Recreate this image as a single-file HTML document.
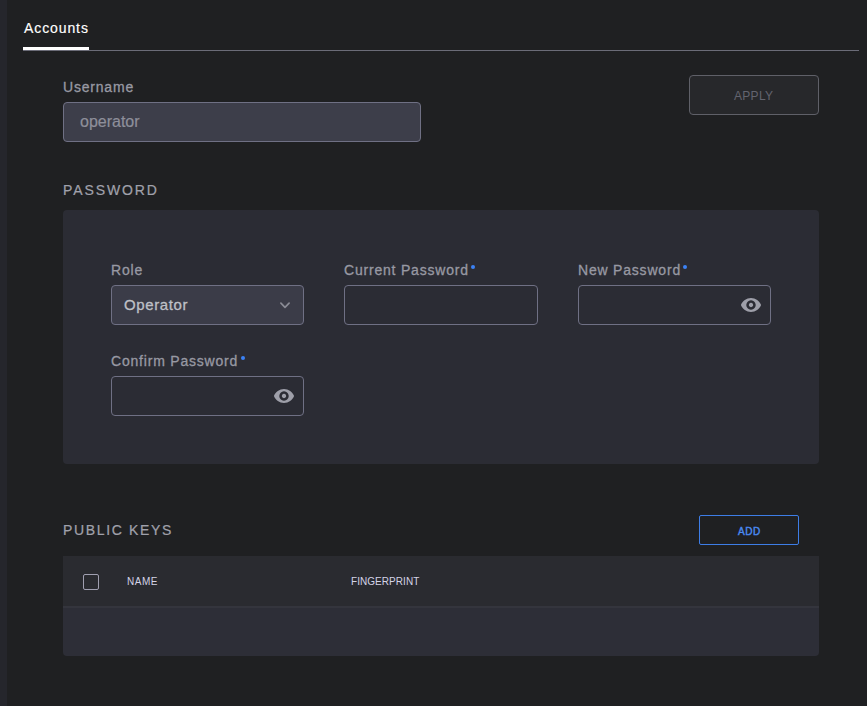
<!DOCTYPE html>
<html>
<head>
<meta charset="utf-8">
<style>
*{box-sizing:border-box;margin:0;padding:0}
html,body{width:867px;height:706px;overflow:hidden;background:#1f2022;font-family:"Liberation Sans",sans-serif}
.abs{position:absolute}
.strip{left:0;top:0;width:7px;height:706px;background:#25262c}
.tab{left:24px;top:20px;font-size:14px;color:#ffffff;letter-spacing:0.9px;white-space:nowrap;-webkit-text-stroke:0.15px #fff}
.tabline{left:23px;top:47px;width:66px;height:3px;background:#ffffff}
.divider{left:23px;top:50px;width:836px;height:1px;background:#6b6c78}
.lbl{font-size:14px;color:#9899a3;letter-spacing:0.8px;white-space:nowrap;-webkit-text-stroke:0.3px #9899a3}
.input{border:1px solid #6f7084;border-radius:4px}
.uname{left:63px;top:102px;width:358px;height:40px;background:#3d3e4a}
.utext{left:80px;top:113px;font-size:16px;color:#8e8f9a;white-space:nowrap;letter-spacing:0px;-webkit-text-stroke:0.2px #8e8f9a}
.apply{left:689px;top:75px;width:130px;height:40px;border:1px solid #5f6068;border-radius:4px;background:#27282b}
.applyt{left:734px;top:89px;font-size:12px;color:#63646f;letter-spacing:0.3px;white-space:nowrap}
.h{font-size:14px;color:#a0a1ab;letter-spacing:1.9px;white-space:nowrap;-webkit-text-stroke:0.2px #a3a4ae}
.panel{left:63px;top:210px;width:756px;height:254px;background:#2b2c34;border-radius:4px}
.sel{background:#3b3c48}
.pw{background:#2b2c34}
.dot{width:4.5px;height:4.5px;margin:-0.2px 0 0 -0.2px;border-radius:50%;background:#3b82f6}
.eye{width:22px;height:22px}
.add{left:699px;top:515px;width:100px;height:30px;border:1px solid #3d7de6;border-radius:2px}
.addt{left:738px;top:526px;font-size:10px;font-weight:400;color:#4a8af0;white-space:nowrap;letter-spacing:0.6px;-webkit-text-stroke:0.4px #4a8af0}
.table{left:63px;top:556px;width:756px;height:100px;border-radius:0 0 4px 4px;background:#2d2e37;overflow:hidden}
.thead{left:0;top:0;width:756px;height:50px;background:#2a2b30}
.tdiv{left:0;top:50px;width:756px;height:2px;background:#34353d}
.cb{left:20px;top:18px;width:16px;height:16px;border:1.5px solid #a09fb0;border-radius:2px}
.th{font-size:10px;color:#d4d4e6;white-space:nowrap;letter-spacing:0.5px}
</style>
</head>
<body>
<div class="abs strip"></div>
<div class="abs tab">Accounts</div>
<div class="abs tabline"></div>
<div class="abs divider"></div>

<div class="abs lbl" style="left:63px;top:79px">Username</div>
<div class="abs input uname"></div>
<div class="abs utext">operator</div>

<div class="abs apply"></div>
<div class="abs applyt">APPLY</div>

<div class="abs h" style="left:63px;top:182px">PASSWORD</div>
<div class="abs panel"></div>

<div class="abs lbl" style="left:111px;top:262px">Role</div>
<div class="abs input sel" style="left:111px;top:285px;width:193px;height:40px"></div>
<div class="abs" style="left:124px;top:296px;font-size:15px;color:#bfc0c7;white-space:nowrap;letter-spacing:0.6px;-webkit-text-stroke:0.3px #bfc0c7">Operator</div>
<svg class="abs" style="left:279px;top:301px" width="12" height="8" viewBox="0 0 12 8"><path d="M1.9 2.2 L6 6.3 L10.1 2.2" fill="none" stroke="#8a8b95" stroke-width="1.7" stroke-linecap="round" stroke-linejoin="round"/></svg>

<div class="abs lbl" style="left:344px;top:262px">Current Password</div>
<div class="abs dot" style="left:471px;top:265px"></div>
<div class="abs input pw" style="left:344px;top:285px;width:194px;height:40px"></div>

<div class="abs lbl" style="left:578px;top:262px">New Password</div>
<div class="abs dot" style="left:683px;top:265px"></div>
<div class="abs input pw" style="left:578px;top:285px;width:193px;height:40px"></div>
<svg class="abs eye" style="left:740px;top:294px" viewBox="0 0 24 24"><path fill="#9e9fa9" fill-rule="evenodd" d="M12 4.4C7 4.4 2.73 7.55 1 12c1.73 4.45 6 7.6 11 7.6s9.27-3.15 11-7.6C21.27 7.55 17 4.4 12 4.4zM12 6.87a5.13 5.13 0 1 0 0.001 0zM12 9.6a2.4 2.4 0 1 0 0.001 0z"/></svg>

<div class="abs lbl" style="left:111px;top:353px">Confirm Password</div>
<div class="abs dot" style="left:241px;top:356px"></div>
<div class="abs input pw" style="left:111px;top:376px;width:193px;height:40px"></div>
<svg class="abs eye" style="left:273px;top:385px" viewBox="0 0 24 24"><path fill="#9e9fa9" fill-rule="evenodd" d="M12 4.4C7 4.4 2.73 7.55 1 12c1.73 4.45 6 7.6 11 7.6s9.27-3.15 11-7.6C21.27 7.55 17 4.4 12 4.4zM12 6.87a5.13 5.13 0 1 0 0.001 0zM12 9.6a2.4 2.4 0 1 0 0.001 0z"/></svg>

<div class="abs h" style="left:63px;top:522px;letter-spacing:1.65px">PUBLIC KEYS</div>
<div class="abs add"></div>
<div class="abs addt">ADD</div>

<div class="abs table">
  <div class="abs thead"></div>
  <div class="abs tdiv"></div>
  <div class="abs cb"></div>
  <div class="abs th" style="left:64px;top:20px">NAME</div>
  <div class="abs th" style="left:288px;top:20px;letter-spacing:0.05px">FINGERPRINT</div>
</div>
</body>
</html>
